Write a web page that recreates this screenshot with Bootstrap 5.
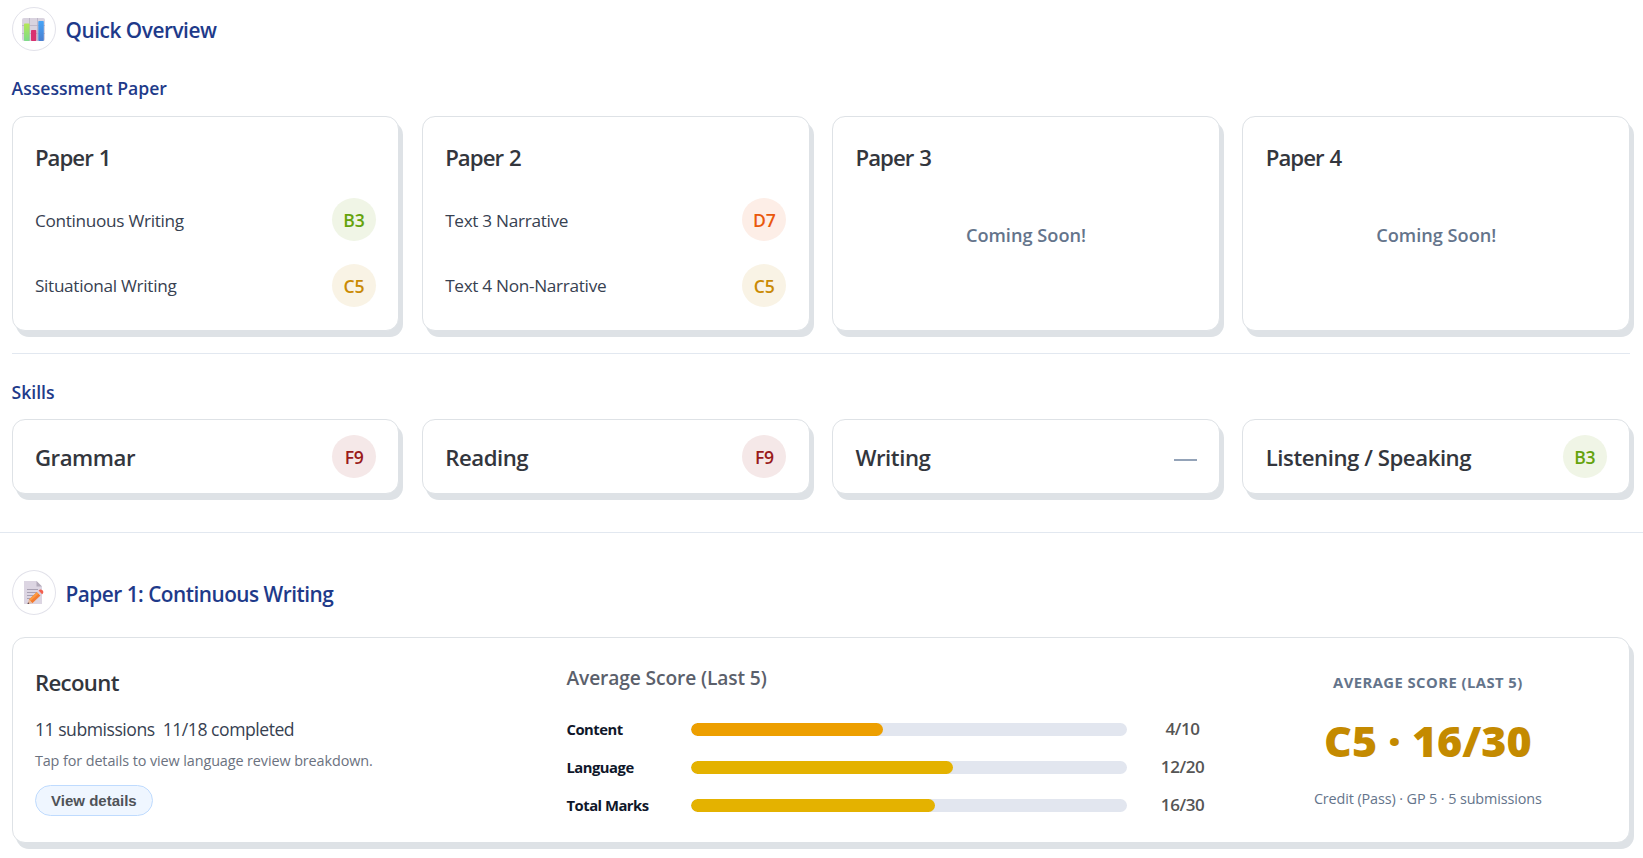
<!DOCTYPE html>
<html lang="en">
<head>
  <meta charset="utf-8">
  <title>Quick Overview</title>
  <meta name="viewport" content="width=device-width, initial-scale=1">
  <link href="https://cdn.jsdelivr.net/npm/bootstrap@5.3.0/dist/css/bootstrap.min.css" rel="stylesheet">

  <style>
    body {
      font-family: "Segoe UI", "Open Sans", "Noto Sans", sans-serif;
      color: #374151;
      background: #fff;
    }
    .page-pad { padding-left: 11.5px; padding-right: 12.8px; }
    .overview { padding-top: 7px; padding-bottom: 38px; border-bottom: 1px solid #e2e8f0; }
    .details { padding-top: 37px; padding-bottom: 9px; }

    /* section headings */
    .icon-circle {
      width: 44px;
      height: 44px;
      border: 1px solid #e2e2ea;
    }
    .section-title {
      font-size: 20.8px;
      font-weight: 600;
      line-height: 30px;
      color: #1e3a8a;
      padding-top: 2px;
      margin: 0 0 0 10px;
      letter-spacing: -.45px;
    }
    .details .icon-circle { height: 45px; }
    .details .section-title { padding-top: 3px; letter-spacing: -.5px; }
    .group-title {
      font-size: 17.6px;
      font-weight: 600;
      line-height: 26px;
      color: #1e3a8a;
      margin: 0;
    }
    .papers-title { margin-top: 24px; margin-bottom: 15px; }
    .skills-title { margin-top: 25px; margin-bottom: 14px; }

    /* cards */
    .card-grid { display: grid; grid-template-columns: repeat(4, 1fr); gap: 22.4px; }
    .soft-card {
      border: 1px solid #dee2e6;
      border-radius: 13px;
      background: #fff;
      box-shadow: 4px 6px 0 #dee2e6;
      padding: 22.4px;
    }
    .paper-card { height: 215px; }
    .skill-card { height: 75px; padding-top: 0; padding-bottom: 0; }
    .card-name {
      font-size: 22.2px;
      font-weight: 600;
      line-height: 36px;
      color: #33363d;
      margin: 0;
      padding-top: 1px;
      letter-spacing: -.45px;
    }
    .paper-card .card-name { letter-spacing: -.95px; word-spacing: 1px; }
    .skill-card .card-name { padding-top: 3px; }
    .line-list { margin-top: 21.8px; gap: 22.4px; }
    .line-text { font-size: 17.2px; letter-spacing: -.3px; padding-top: 2px; }
    .grade {
      width: 44px;
      height: 43.2px;
      font-size: 17.6px;
      font-weight: 600;
      padding-top: 1px;
      letter-spacing: -.2px;
    }
    .grade-b { color: #65a30d; background: #f0f5e6; }
    .grade-c { color: #ca8a04; background: #f9f3e5; }
    .grade-d { color: #ea580c; background: #fdeee7; }
    .grade-f { color: #991b1b; background: #f5e8e8; letter-spacing: -.4px; }
    .no-grade { width: 23px; height: 2px; background: #94a3b8; margin-top: 6px; }
    .soon { font-size: 18.2px; font-weight: 600; color: #64748b; padding-bottom: 12px; }
    .split { height: 1px; background: #e2e8f0; margin-top: 22px; }

    /* recount card */
    .recount-card {
      height: 206px;
      margin-top: 22px;
      display: grid;
      grid-template-columns: 531.6px 660px 1fr;
      padding: 0 0 0 22.4px;
    }
    .recount-name { margin-top: 26px; letter-spacing: -.65px; }
    .stats { margin-top: 15px; font-size: 17.6px; line-height: 26px; letter-spacing: -.47px; }
    .hint { margin-top: 8px; font-size: 14.4px; line-height: 22px; color: #6b7280; letter-spacing: -.1px; }
    .details-btn {
      font-family: Arial, "Liberation Sans", sans-serif;
      font-size: 15px;
      font-weight: 700;
      line-height: 17px;
      color: #4f5358;
      background: #eff6ff;
      border: 1px solid #bfdbfe;
      padding: 6px 15px;
      width: 118px;
      height: 31px;
      margin-top: 13px;
    }
    .score-head {
      margin-top: 26px;
      margin-bottom: 18px;
      font-size: 19.2px;
      font-weight: 600;
      line-height: 28px;
      color: #5b606b;
      letter-spacing: -.12px;
    }
    .score-row { display: grid; grid-template-columns: 124.6px 436px 1fr; height: 38px; align-items: center; }
    .score-label { font-size: 14.8px; font-weight: 700; color: #0f172a; letter-spacing: -.5px; }
    .score-track { height: 13px; border-radius: 7px; background: #e2e6ef; overflow: hidden; }
    .score-fill { height: 100%; border-radius: 7px; background: #e4b200; }
    .score-fill.low { background: #ed9f00; }
    .score-value { font-size: 17px; font-weight: 600; color: #555; width: 111px; text-align: center; letter-spacing: -.4px; }
    .avg-label { margin-top: 32.5px; font-size: 14.8px; font-weight: 700; line-height: 22px; color: #64748b; letter-spacing: .45px; }
    .avg-grade { margin-top: 23.5px; font-size: 43px; font-weight: 800; line-height: 50px; color: #c48a00; }
    .avg-note { margin-top: 22px; font-size: 14.4px; line-height: 22px; color: #64748b; letter-spacing: -.11px; }
  </style>
</head>

<body>
  <section class="overview page-pad">
    <div class="d-flex align-items-center">
      <div class="icon-circle rounded-circle d-flex align-items-center justify-content-center">
        <!-- bar chart -->
        <svg width="23" height="23" viewBox="0 0 23 23">
          <rect width="23" height="23" rx="2" fill="#d9d3df"/>
          <path d="M0 7.500h23M0 15.500h23M7.500 0v23M15.500 0v23" stroke="#b9b1c3" stroke-width=".8"/>
          <rect x="2" y="5.500" width="5.500" height="17.500" rx=".8" fill="url(#barGreen)"/>
          <rect x="9" y="12" width="5.300" height="11" rx=".8" fill="#d9316f"/>
          <rect x="16.300" y="3" width="5.500" height="20" rx=".8" fill="url(#barBlue)"/>
          <defs>
            <linearGradient id="barGreen" x2="0" y2="1"><stop stop-color="#b4e755"/><stop offset="1" stop-color="#7ddb8a"/></linearGradient>
            <linearGradient id="barBlue" x2="0" y2="1"><stop stop-color="#46a4f7"/><stop offset="1" stop-color="#4a7fd0"/></linearGradient>
          </defs>
        </svg>
      </div>
      <h2 class="section-title">Quick Overview</h2>
    </div>

    <h3 class="group-title papers-title">Assessment Paper</h3>
    <div class="card-grid">
      <div class="soft-card paper-card">
        <h4 class="card-name">Paper 1</h4>
        <div class="line-list d-flex flex-column">
          <div class="d-flex align-items-center justify-content-between">
            <span class="line-text">Continuous Writing</span>
            <span class="grade grade-b rounded-circle d-flex align-items-center justify-content-center">B3</span>
          </div>
          <div class="d-flex align-items-center justify-content-between">
            <span class="line-text">Situational Writing</span>
            <span class="grade grade-c rounded-circle d-flex align-items-center justify-content-center">C5</span>
          </div>
        </div>
      </div>
      <div class="soft-card paper-card">
        <h4 class="card-name">Paper 2</h4>
        <div class="line-list d-flex flex-column">
          <div class="d-flex align-items-center justify-content-between">
            <span class="line-text">Text 3 Narrative</span>
            <span class="grade grade-d rounded-circle d-flex align-items-center justify-content-center">D7</span>
          </div>
          <div class="d-flex align-items-center justify-content-between">
            <span class="line-text">Text 4 Non-Narrative</span>
            <span class="grade grade-c rounded-circle d-flex align-items-center justify-content-center">C5</span>
          </div>
        </div>
      </div>
      <div class="soft-card paper-card d-flex flex-column">
        <h4 class="card-name">Paper 3</h4>
        <div class="soon flex-grow-1 d-flex align-items-center justify-content-center">Coming Soon!</div>
      </div>
      <div class="soft-card paper-card d-flex flex-column">
        <h4 class="card-name">Paper 4</h4>
        <div class="soon flex-grow-1 d-flex align-items-center justify-content-center">Coming Soon!</div>
      </div>
    </div>

    <div class="split"></div>

    <h3 class="group-title skills-title">Skills</h3>
    <div class="card-grid">
      <div class="soft-card skill-card d-flex align-items-center justify-content-between">
        <h4 class="card-name">Grammar</h4>
        <span class="grade grade-f rounded-circle d-flex align-items-center justify-content-center">F9</span>
      </div>
      <div class="soft-card skill-card d-flex align-items-center justify-content-between">
        <h4 class="card-name">Reading</h4>
        <span class="grade grade-f rounded-circle d-flex align-items-center justify-content-center">F9</span>
      </div>
      <div class="soft-card skill-card d-flex align-items-center justify-content-between">
        <h4 class="card-name">Writing</h4>
        <span class="no-grade"></span>
      </div>
      <div class="soft-card skill-card d-flex align-items-center justify-content-between">
        <h4 class="card-name">Listening / Speaking</h4>
        <span class="grade grade-b rounded-circle d-flex align-items-center justify-content-center">B3</span>
      </div>
    </div>
  </section>

  <section class="details page-pad">
    <div class="d-flex align-items-center">
      <div class="icon-circle rounded-circle d-flex align-items-center justify-content-center">
        <!-- memo with pencil -->
        <svg width="23" height="23" viewBox="0 0 23 23">
          <path d="M2 0h12.500l5.500 5.500V23H2z" fill="#dcd5e2"/>
          <path d="M14.500 0v5.500H20z" fill="#b3abbb"/>
          <path d="M5 8.500h11M5 11.500h10M5 14.500h7M5 17.500h4" stroke="#a8a0b2" stroke-width="1"/>
          <path d="M7 18.500 15 11l3.500 3.600-8.200 7.600z" fill="#f47b30"/>
          <path d="M7 18.500 15 11l1.600 1.700-8.300 7.500z" fill="#fc9a40"/>
          <path d="M7 18.500 5.500 23l4.800-.8z" fill="#e9b99a"/>
          <path d="M6.100 21.200 5.500 23l1.900-.3z" fill="#4a3a4a"/>
          <path d="m15 11 1.600-1.400 3.500 3.600-1.600 1.400z" fill="#d9cfe0"/>
          <path d="m16.600 9.600.8-.7c1-.8 2.200-.4 3.100.4.800.9 1.200 2.100.4 3.100l-.8.800z" fill="#f2604f"/>
        </svg>
      </div>
      <h2 class="section-title">Paper 1: Continuous Writing</h2>
    </div>

    <div class="soft-card recount-card">
      <div>
        <h4 class="card-name recount-name">Recount</h4>
        <div class="stats d-flex gap-2"><span>11 submissions</span> <span>11/18 completed</span></div>
        <div class="hint">Tap for details to view language review breakdown.</div>
        <button type="button" class="details-btn rounded-pill text-nowrap">View details</button>
      </div>

      <div>
        <div class="score-head">Average Score (Last 5)</div>
        <div class="score-row">
          <span class="score-label">Content</span>
          <div class="score-track"><div class="score-fill low" style="width: 44%"></div></div>
          <span class="score-value">4/10</span>
        </div>
        <div class="score-row">
          <span class="score-label">Language</span>
          <div class="score-track"><div class="score-fill" style="width: 60%"></div></div>
          <span class="score-value">12/20</span>
        </div>
        <div class="score-row">
          <span class="score-label">Total Marks</span>
          <div class="score-track"><div class="score-fill" style="width: 56%"></div></div>
          <span class="score-value">16/30</span>
        </div>
      </div>

      <div class="text-center">
        <div class="avg-label">AVERAGE SCORE (LAST 5)</div>
        <div class="avg-grade">C5 · 16/30</div>
        <div class="avg-note">Credit (Pass) · GP 5 · 5 submissions</div>
      </div>
    </div>
  </section>

  <script src="https://cdn.jsdelivr.net/npm/bootstrap@5.3.0/dist/js/bootstrap.bundle.min.js"></script>
</body>
</html>
